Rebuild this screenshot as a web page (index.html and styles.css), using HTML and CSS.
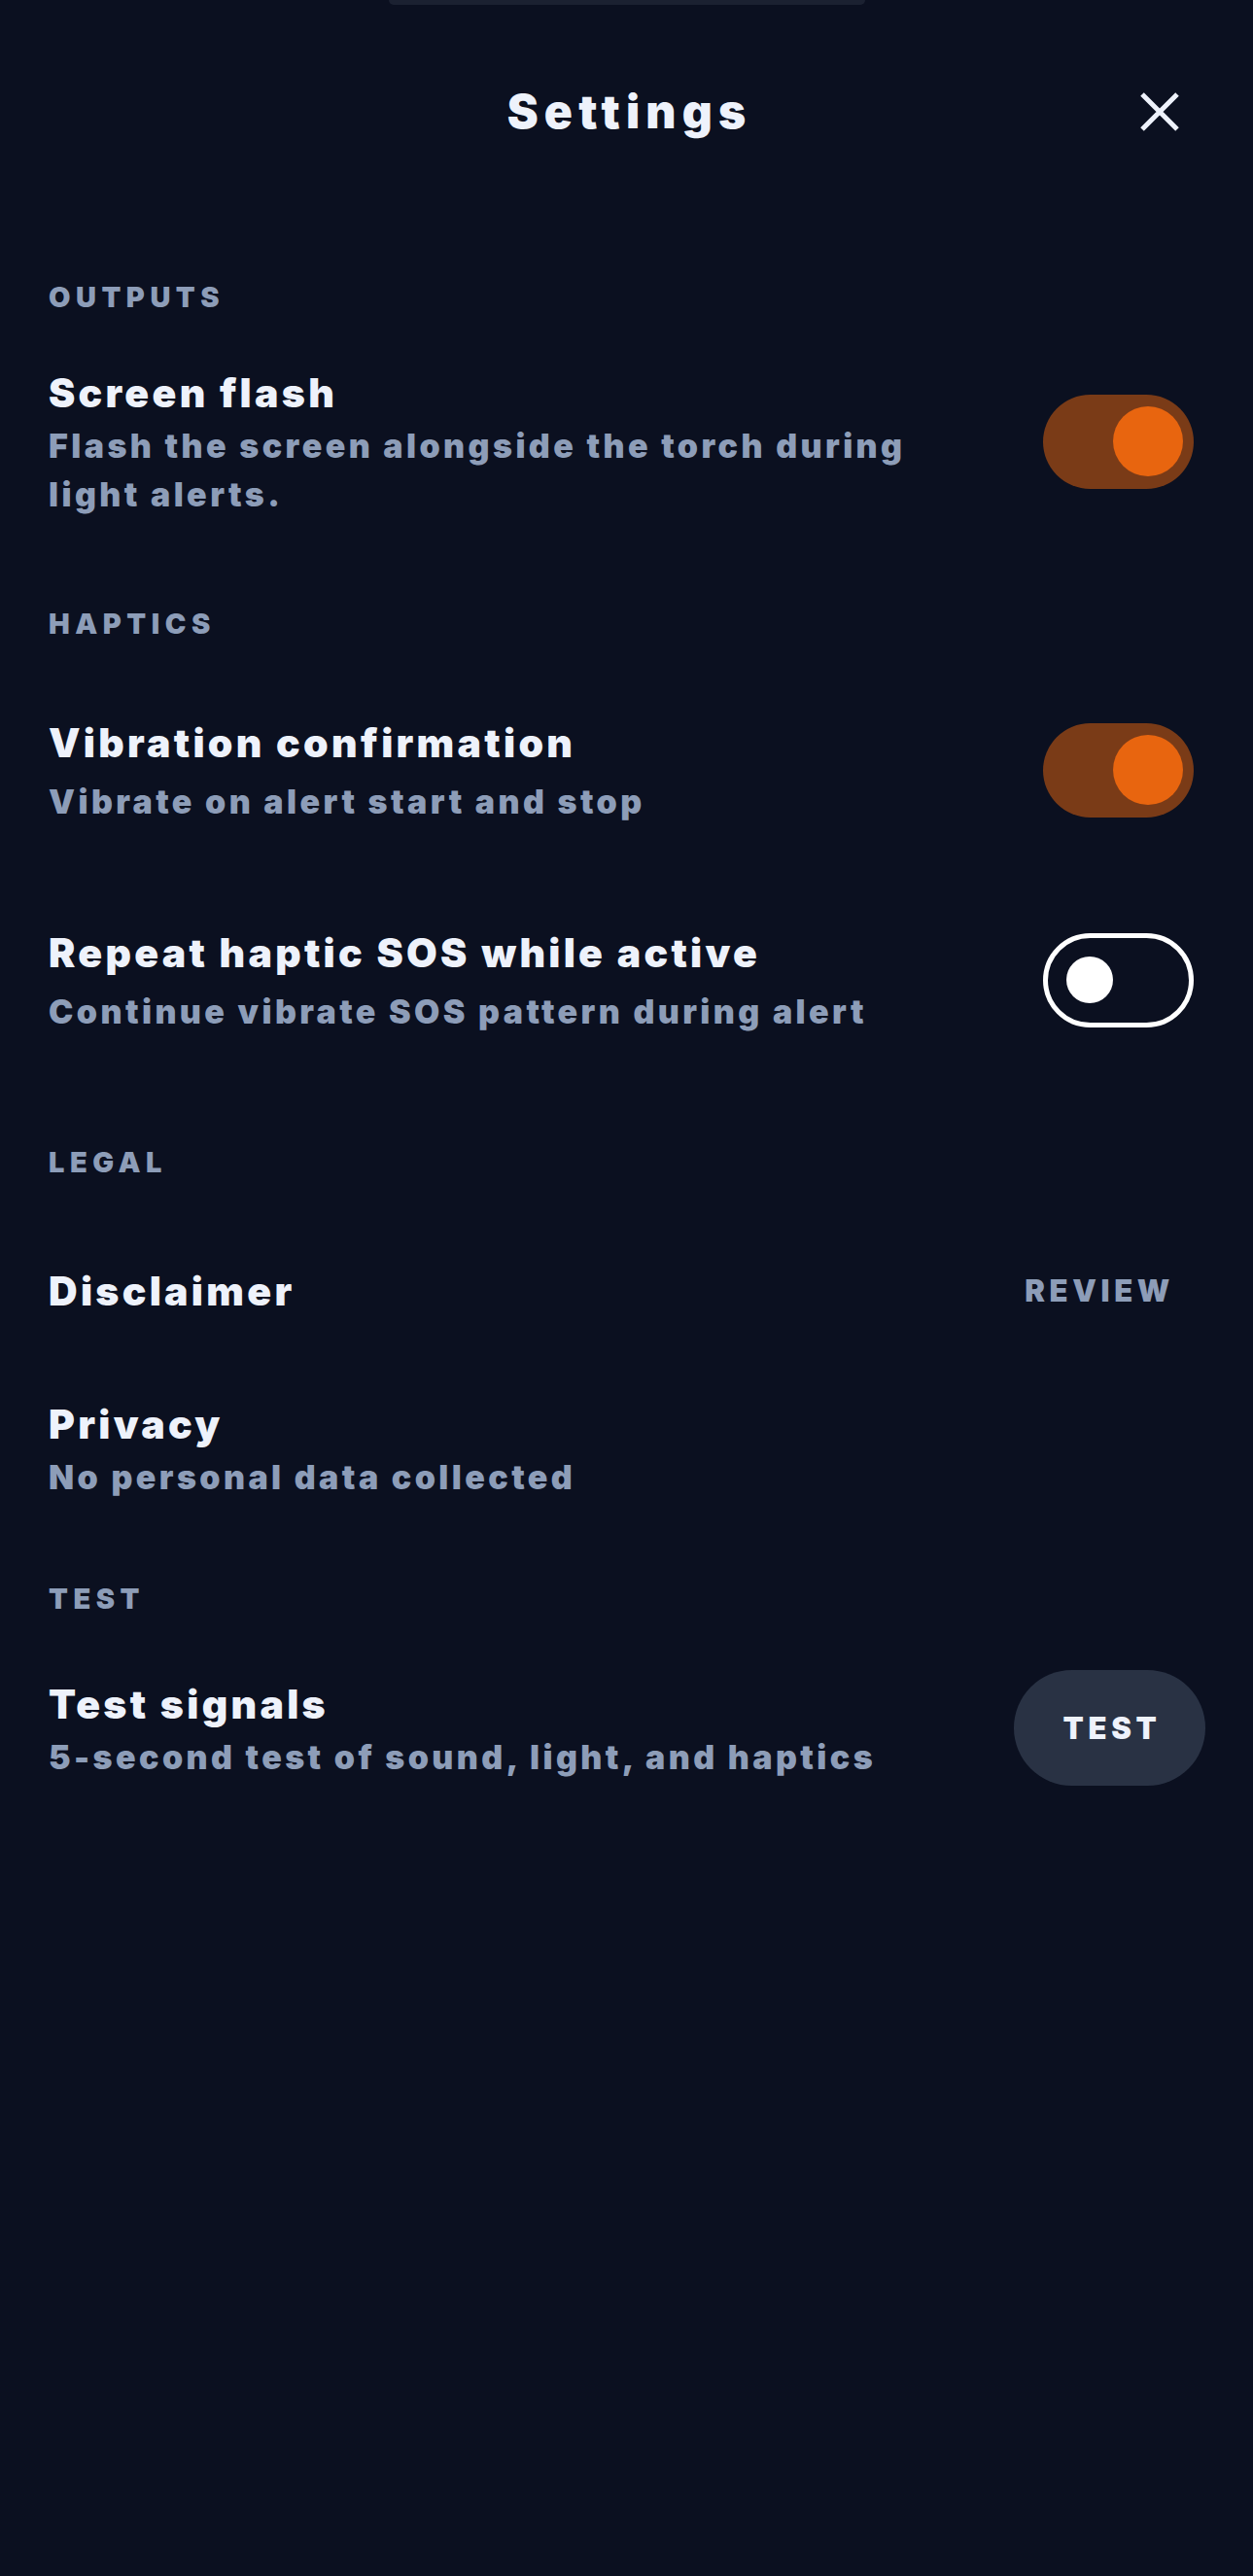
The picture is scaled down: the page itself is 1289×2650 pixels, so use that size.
FILE: index.html
```html
<!DOCTYPE html>
<html lang="en">

<head>
  <meta charset="UTF-8">
  <meta name="viewport" content="width=device-width, initial-scale=1.0">
  <title>Settings</title>
  <link rel="stylesheet" href="styles.css">
</head>

<body>
  <div class="grabber"></div>

  <header class="header">
    <div></div>
    <h1 class="title">Settings</h1>
    <button class="close" aria-label="Close">
      <svg width="40" height="40" viewBox="0 0 40 40">
        <path d="M2 2 L38 38 M38 2 L2 38" stroke="#eef2fb" stroke-width="5" fill="none" />
      </svg>
    </button>
  </header>

  <!-- Outputs -->
  <section class="section section-outputs">
    <h2 class="section-label">OUTPUTS</h2>
    <div class="row">
      <div class="row-text">
        <div class="row-title">Screen flash</div>
        <div class="row-sub">Flash the screen alongside the torch during light alerts.</div>
      </div>
      <div class="toggle on"><span class="knob"></span></div>
    </div>
  </section>

  <!-- Haptics -->
  <section class="section section-haptics">
    <h2 class="section-label">HAPTICS</h2>
    <div class="row">
      <div class="row-text">
        <div class="row-title">Vibration confirmation</div>
        <div class="row-sub spaced">Vibrate on alert start and stop</div>
      </div>
      <div class="toggle on"><span class="knob"></span></div>
    </div>
    <div class="row">
      <div class="row-text">
        <div class="row-title">Repeat haptic SOS while active</div>
        <div class="row-sub spaced">Continue vibrate SOS pattern during alert</div>
      </div>
      <div class="toggle"><span class="knob"></span></div>
    </div>
  </section>

  <!-- Legal -->
  <section class="section section-legal">
    <h2 class="section-label">LEGAL</h2>
    <div class="row">
      <div class="row-text">
        <div class="row-title">Disclaimer</div>
      </div>
      <button class="link-btn">REVIEW</button>
    </div>
    <div class="row">
      <div class="row-text">
        <div class="row-title">Privacy</div>
        <div class="row-sub">No personal data collected</div>
      </div>
    </div>
  </section>

  <!-- Test -->
  <section class="section section-test">
    <h2 class="section-label">TEST</h2>
    <div class="row">
      <div class="row-text">
        <div class="row-title">Test signals</div>
        <div class="row-sub">5-second test of sound, light, and haptics</div>
      </div>
      <button class="pill-btn">TEST</button>
    </div>
  </section>
</body>

</html>
```

FILE: styles.css
```css
body {
  margin: 0;
  background-color: #0b1020;
  color: #eef2fb;
  font-family: Inter, "Noto Sans", sans-serif;
  font-weight: 900;
  min-height: 2650px;
}

button {
  font-family: inherit;
  font-weight: 900;
  border: none;
  background: none;
  cursor: pointer;
  padding: 0;
}

.grabber {
  width: 490px;
  height: 5px;
  margin: 0 auto;
  background-color: #1b2131;
  border-radius: 0 0 14px 14px;
}

.header {
  display: grid;
  grid-template-columns: 1fr auto 1fr;
  align-items: center;
  height: 110px;
  margin-top: 55px;
}

.title {
  margin: 0;
  font-size: 48px;
  line-height: 60px;
  letter-spacing: 0.13em;
  font-weight: 900;
  padding-left: 0.13em;
}

.close {
  justify-self: end;
  margin-right: 76px;
  width: 40px;
  height: 40px;
}

.close svg {
  display: block;
}

.section {
  padding: 0 49px 0 50px;
}

.section-label {
  margin: 0;
  font-size: 29px;
  line-height: 36px;
  letter-spacing: 0.19em;
  color: #8d9db8;
  font-weight: 900;
}

.row {
  display: flex;
  align-items: center;
}

.row-text {
  flex: 1;
  padding-right: 120px;
}

.row-title {
  font-size: 41px;
  line-height: 60px;
  letter-spacing: 0.08em;
}

.row-sub {
  font-size: 34px;
  line-height: 50px;
  letter-spacing: 0.1em;
  color: #8d9db8;
}

.row-sub.spaced {
  margin-top: 6px;
}

/* vertical rhythm, taken from the design */
.section-outputs { margin-top: 118px; }
.section-outputs .row { margin-top: 50px; }

.section-haptics { margin-top: 90px; }
.section-haptics .row { margin-top: 74px; }
.section-haptics .row + .row { margin-top: 100px; }

.section-legal { margin-top: 112px; }
.section-legal .row { margin-top: 84px; }
.section-legal .row + .row { margin-top: 77px; }

.section-test { margin-top: 82px; }
.section-test .row { margin-top: 55px; }

/* toggles */
.toggle {
  box-sizing: border-box;
  width: 155px;
  height: 97px;
  margin-right: 12px;
  border-radius: 49px;
  border: 5px solid #ffffff;
  display: flex;
  align-items: center;
  padding-left: 19px;
}

.toggle .knob {
  width: 48px;
  height: 48px;
  border-radius: 50%;
  background-color: #ffffff;
}

.toggle.on {
  border: none;
  background-color: #7a3b17;
  justify-content: flex-end;
  padding: 0 11px 0 0;
}

.toggle.on .knob {
  width: 72px;
  height: 72px;
  background-color: #e8650f;
}

.link-btn {
  color: #8d9db8;
  font-size: 31px;
  line-height: 60px;
  letter-spacing: 0.15em;
  margin-right: 32px;
}

.pill-btn {
  width: 197px;
  height: 119px;
  border-radius: 60px;
  background-color: #293244;
  color: #eef2fb;
  font-size: 31px;
  letter-spacing: 0.15em;
  padding-left: 5px;
}
```
